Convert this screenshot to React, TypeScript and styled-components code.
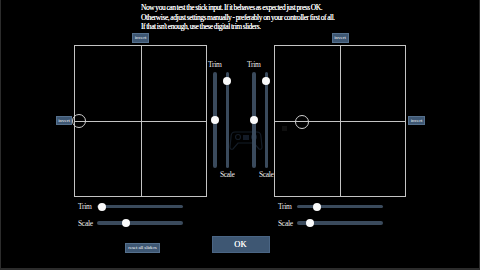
import React from "react";
import styled, { createGlobalStyle } from "styled-components";

const Global = createGlobalStyle`
  html, body { margin: 0; padding: 0; background: #000; }
  * { box-sizing: border-box; }
`;

const SERIF = `"Liberation Serif", "Times New Roman", serif`;
const TRACK = "#3a4a5c";
const BTN = "#3e5773";

const Page = styled.div`
  width: 480px;
  height: 270px;
  background: #000;
  border: 1px solid #2c2c2c;
  border-top: none;
  border-bottom-width: 2px;
  font-family: ${SERIF};
  color: #e6e6e6;
  overflow: hidden;
`;

const Header = styled.div`
  padding: 3px 0 0 140px;
  font-size: 7.5px;
  line-height: 9.5px;
  letter-spacing: -0.45px;
  word-spacing: -0.3px;
  color: #f6f6f6;
  text-shadow: 0 0 0.3px #fff;
`;

const Main = styled.div`
  display: flex;
  padding-left: 55px;
  margin-top: 1px;
`;

const StickGrid = styled.div<{ $cols: string }>`
  display: grid;
  grid-template-columns: ${(p) => p.$cols};
  grid-template-rows: 10px 152px auto auto;
  column-gap: 2px;
  row-gap: 2px;
`;

const SmallButton = styled.div<{ $col: number; $row: number }>`
  grid-column: ${(p) => p.$col};
  grid-row: ${(p) => p.$row};
  justify-self: center;
  align-self: center;
  height: 10px;
  padding: 0 3px;
  background: ${BTN};
  border: 1px solid #55708d;
  color: #f4f4f4;
  font-size: 5px;
  line-height: 8px;
  white-space: nowrap;
`;

const InvertTop = styled(SmallButton)`
  width: 17px;
  padding: 0;
  text-align: center;
`;

const InvertSide = styled(SmallButton)<{ $w: number }>`
  width: ${(p) => p.$w}px;
  height: 9.5px;
  padding: 0;
  text-align: center;
  line-height: 7.5px;
`;

const ResetButton = styled(SmallButton)`
  margin-top: 13px;
  margin-left: 4px;
  width: 35px;
  padding: 0;
  text-align: center;
  letter-spacing: -0.1px;
`;

const Field = styled.div<{ $col: number }>`
  grid-column: ${(p) => p.$col};
  grid-row: 2;
  position: relative;
  border: 1px solid #c4c4c4;
  &::before {
    content: "";
    position: absolute;
    left: 50%;
    top: 0;
    bottom: 0;
    width: 1px;
    background: #c4c4c4;
  }
  &::after {
    content: "";
    position: absolute;
    top: 50%;
    left: 0;
    right: 0;
    height: 1px;
    background: #c4c4c4;
  }
`;

const Cursor = styled.div`
  position: absolute;
  width: 14px;
  height: 14px;
  margin: -7px 0 0 -7px;
  border: 1px solid #cfcfcf;
  border-radius: 50%;
  z-index: 1;
`;

const Ghost = styled.div`
  position: absolute;
  width: 5px;
  height: 5px;
  background: #0f0f0f;
`;

const HSliders = styled.div<{ $col: number }>`
  grid-column: ${(p) => p.$col};
  grid-row: 3;
  margin-top: 3px;
  display: grid;
  grid-template-columns: 23px 86px;
  grid-auto-rows: 10px;
  row-gap: 6.5px;
  align-items: center;
`;

const Label = styled.div`
  font-size: 7.5px;
  letter-spacing: -0.3px;
  color: #eeeeee;
  white-space: nowrap;
`;

const HLabel = styled(Label)`
  padding-left: 4px;
`;

const HTrack = styled.div`
  position: relative;
  height: 3.5px;
  border-radius: 2px;
  background: ${TRACK};
`;

const Thumb = styled.div`
  position: absolute;
  width: 8px;
  height: 8px;
  margin: -4px 0 0 -4px;
  border-radius: 50%;
  background: #fafafa;
`;

const HThumb = styled(Thumb)`
  top: 50%;
`;

const VThumb = styled(Thumb)`
  left: 50%;
`;

const Center = styled.div`
  width: 67px;
  position: relative;
  display: flex;
  flex-direction: column;
  align-items: center;
  padding-top: 27.5px;
`;

const PairRow = styled.div`
  display: flex;
  gap: 14px;
  position: relative;
  z-index: 1;
`;

const Pair = styled.div`
  display: grid;
  grid-template-columns: 12.5px 12.5px;
  grid-template-rows: 9px 96px 9px;
  row-gap: 2.5px;
  justify-items: center;
  align-items: center;
`;

const VLabel = styled(Label)<{ $col: number; $row: number }>`
  grid-column: ${(p) => p.$col};
  grid-row: ${(p) => p.$row};
  width: 24px;
  text-align: center;
`;

const VTrack = styled.div<{ $col: number }>`
  grid-column: ${(p) => p.$col};
  grid-row: 2;
  position: relative;
  width: 3.5px;
  height: 96px;
  border-radius: 2px;
  background: ${TRACK};
`;

const OkButton = styled.div`
  margin-top: 57px;
  width: 58px;
  height: 17px;
  background: ${BTN};
  border: 1px solid #4a6584;
  color: #f4f4f4;
  font-size: 8.5px;
  line-height: 15px;
  text-align: center;
  text-shadow: 0 0 0.4px #fff;
`;

const PadArt = styled.svg`
  position: absolute;
  left: 22px;
  top: 94px;
  z-index: 0;
  opacity: 0.45;
`;

function HSlider({ label, value }: { label: string; value: number }) {
  return (
    <>
      <HLabel>{label}</HLabel>
      <HTrack>
        <HThumb style={{ left: `${value}%` }} />
      </HTrack>
    </>
  );
}

function VPair({ trim, scale }: { trim: number; scale: number }) {
  return (
    <Pair>
      <VLabel $col={1} $row={1}>Trim</VLabel>
      <VTrack $col={1}>
        <VThumb style={{ top: `${trim}%` }} />
      </VTrack>
      <VTrack $col={2}>
        <VThumb style={{ top: `${scale}%` }} />
      </VTrack>
      <VLabel $col={2} $row={3}>Scale</VLabel>
    </Pair>
  );
}

export default function App() {
  return (
    <>
      <Global />
      <Page>
        <Header>
          <div>Now you can test the stick input. If it behaves as expected just press OK.</div>
          <div>Otherwise, adjust settings manually - preferably on your controller first of all.</div>
          <div>If that isn't enough, use these digital trim sliders.</div>
        </Header>
        <Main>
          <StickGrid $cols="16px 133px">
            <InvertTop $col={2} $row={1}>invert</InvertTop>
            <InvertSide $col={1} $row={2} $w={16}>invert</InvertSide>
            <Field $col={2}>
              <Cursor style={{ left: "2.8%", top: "50%" }} />
            </Field>
            <HSliders $col={2}>
              <HSlider label="Trim" value={6} />
              <HSlider label="Scale" value={34} />
            </HSliders>
            <ResetButton $col={2} $row={4}>reset all sliders</ResetButton>
          </StickGrid>
          <Center>
            <PadArt width="34" height="24" viewBox="0 0 34 24">
              <g fill="none" stroke="#2c3e55" strokeWidth="1.2">
                <path d="M6 5 H28 Q32 5 32 10 L33 20 Q33 23 30 22 L25 16 H9 L4 22 Q1 23 1 20 L2 10 Q2 5 6 5 Z" />
                <circle cx="9" cy="10" r="2.5" />
                <circle cx="25" cy="10" r="2.5" />
              </g>
              <rect x="14" y="8" width="6" height="5" fill="#2a3c58" />
            </PadArt>
            <PairRow>
              <VPair trim={51} scale={9.5} />
              <VPair trim={51} scale={9.5} />
            </PairRow>
            <OkButton>OK</OkButton>
          </Center>
          <StickGrid $cols="132px 17px">
            <InvertTop $col={1} $row={1}>invert</InvertTop>
            <Field $col={1}>
              <Cursor style={{ left: "21%", top: "50.7%" }} />
              <Ghost style={{ left: "5.5%", top: "53.5%" }} />
            </Field>
            <InvertSide $col={2} $row={2} $w={17}>invert</InvertSide>
            <HSliders $col={1}>
              <HSlider label="Trim" value={23} />
              <HSlider label="Scale" value={15.5} />
            </HSliders>
          </StickGrid>
        </Main>
      </Page>
    </>
  );
}
